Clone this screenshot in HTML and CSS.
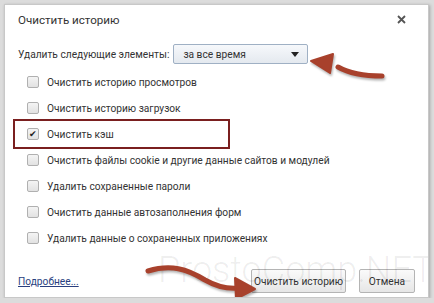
FILE: index.html
```html
<!DOCTYPE html>
<html lang="ru">
<head>
  <meta charset="UTF-8" />
  <title>Очистить историю</title>
  <link rel="stylesheet" href="styles.css">
</head>
<body>
  <div class="dialog">
    <div class="title-row">
      <h1 class="title">Очистить историю</h1>
      <svg class="close" width="9" height="9" viewBox="0 0 9 9">
        <path d="M1 1 L8 8 M8 1 L1 8" stroke="#555" stroke-width="1.8"/>
      </svg>
    </div>

    <div class="range-row">
      <span>Удалить следующие элементы:</span>
      <div class="select">
        <span>за все время</span>
        <span class="caret"></span>
      </div>
    </div>

    <ul class="options">
      <li><span class="box"></span>Очистить историю просмотров</li>
      <li><span class="box"></span>Очистить историю загрузок</li>
      <li class="marked"><span class="box checked">&#x2714;</span>Очистить кэш</li>
      <li><span class="box"></span>Очистить файлы cookie и другие данные сайтов и модулей</li>
      <li><span class="box"></span>Удалить сохраненные пароли</li>
      <li><span class="box"></span>Очистить данные автозаполнения форм</li>
      <li><span class="box"></span>Удалить данные о сохраненных приложениях</li>
    </ul>

    <div class="footer">
      <a href="#" class="more">Подробнее...</a>
      <div class="buttons">
        <button class="btn btn-clear">Очистить историю</button>
        <button class="btn btn-cancel">Отмена</button>
      </div>
    </div>

    <div class="watermark">ProstoComp.NET</div>

    <!-- arrows pointing at the select and the clear button -->
    <svg class="arrow arrow-top" width="80" height="32" viewBox="0 0 80 32">
      <path d="M74 26 C60 26 44 25 30 17" fill="none" stroke="#a8412c" stroke-width="5" stroke-linecap="round"/>
      <path d="M3 11 L25 4 L22 23 Z" fill="#a8412c" stroke="#a8412c" stroke-width="2" stroke-linejoin="round"/>
    </svg>
    <svg class="arrow arrow-bottom" width="116" height="40" viewBox="0 0 116 40">
      <path d="M5 10 C28 3 44 8 62 19 C76 27 86 28 96 27" fill="none" stroke="#a8412c" stroke-width="5" stroke-linecap="round"/>
      <path d="M112 28 L92 17 L93 38 Z" fill="#a8412c" stroke="#a8412c" stroke-width="2" stroke-linejoin="round"/>
    </svg>
  </div>
</body>
</html>
```

FILE: styles.css
```css
body {
  margin: 0;
  background: #dcdcdc;
  font-family: Roboto, "Noto Sans", sans-serif;
  font-size: 10.2px;
  color: #333;
}

.dialog {
  position: relative;
  margin: 4px 0 0 4px;
  width: 425px;
  height: 294px;
  background: #fff;
  border: 1px solid #c8c8c8;
  box-shadow: 1px 1px 3px rgba(0, 0, 0, 0.25);
  box-sizing: border-box;
  padding: 0 13px 0 13px;
  overflow: hidden;
}

.title-row {
  display: flex;
  justify-content: space-between;
  align-items: center;
  height: 30px;
}

.title {
  margin: 0;
  font-size: 11.6px;
  font-weight: normal;
  color: #333;
}

.close {
  margin-right: 9px;
  margin-top: -2px;
}

.range-row {
  display: flex;
  align-items: center;
  gap: 4px;
  margin-top: 8px;
  height: 22px;
}

.select {
  width: 135px;
  height: 20px;
  box-sizing: border-box;
  border: 1px solid #9fb0c4;
  border-radius: 2px;
  background: linear-gradient(#f6f8fb, #e4e9ef);
  display: flex;
  justify-content: space-between;
  align-items: center;
  padding: 0 8px 0 9px;
}

.caret {
  width: 0;
  height: 0;
  border-left: 4px solid transparent;
  border-right: 4px solid transparent;
  border-top: 5px solid #222;
}

.options {
  list-style: none;
  margin: 4px 0 0;
  padding: 0;
}

.options li {
  position: relative;
  display: flex;
  align-items: center;
  height: 26px;
  padding-left: 9px;
}

.box {
  width: 10px;
  height: 10px;
  border: 1px solid #b0b0b0;
  border-radius: 2px;
  background: linear-gradient(#f4f4f4, #e2e2e2);
  margin-right: 8px;
  display: flex;
  align-items: center;
  justify-content: center;
  font-size: 9px;
  line-height: 1;
  color: #222;
}

/* highlight frame drawn over the cache row */
.options li.marked::before {
  content: "";
  position: absolute;
  left: -5px;
  top: -2px;
  bottom: -2px;
  width: 217px;
  border: 2px solid #7a1f1f;
  box-sizing: border-box;
}

.footer {
  display: flex;
  justify-content: space-between;
  align-items: center;
  margin-top: 18px;
}

.more {
  color: #2a3f7f;
}

.buttons {
  display: flex;
  gap: 13px;
}

.btn {
  font-family: inherit;
  font-size: 10.2px;
  color: #333;
  height: 24px;
  padding: 0;
  white-space: nowrap;
  border: 1px solid #b4b4b4;
  border-radius: 2px;
  background: linear-gradient(#fafafa, #e6e6e6);
}

.btn-clear {
  width: 95px;
}

.btn-cancel {
  width: 56px;
}

.watermark {
  position: absolute;
  left: 153px;
  top: 244px;
  font-family: Roboto, sans-serif;
  font-weight: 300;
  font-size: 36px;
  color: rgba(0, 0, 0, 0.07);
  white-space: nowrap;
  pointer-events: none;
}

.arrow {
  position: absolute;
  filter: drop-shadow(1px 2px 1px rgba(0, 0, 0, 0.3));
}

.arrow-top {
  left: 303px;
  top: 45px;
}

.arrow-bottom {
  left: 138px;
  top: 256px;
}
```
